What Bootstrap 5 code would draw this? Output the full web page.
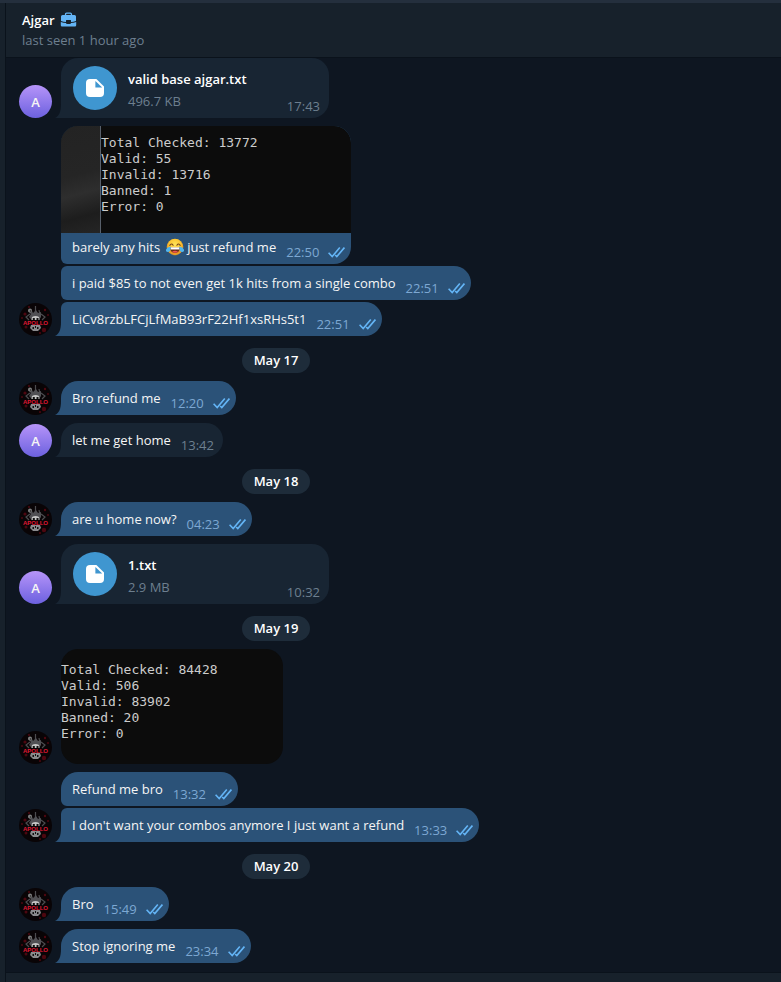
<!DOCTYPE html>
<html lang="en">
<head>
<meta charset="utf-8">
<meta name="viewport" content="width=device-width, initial-scale=1">
<title>Ajgar</title>
<link href="https://cdn.jsdelivr.net/npm/bootstrap@5.3.0/dist/css/bootstrap.min.css" rel="stylesheet">
<style>
:root{--panel:#17212b;--chat:#0e1621;--own:#2b5278;--peer:#182533;--line:#0a121b}
body{background:var(--panel);color:#f5f5f5;font-family:"Open Sans","Noto Sans",sans-serif;font-size:13px;line-height:20px}
.window-edge{height:3px;background:#242f3d}
.pane{margin-left:5px;border-left:1px solid var(--line)}
.chat-head{padding:7px 16px;border-bottom:1px solid var(--line)}
.peer-name{font-size:13px;line-height:20px;font-weight:600}
.case{margin-left:5px}
.seen{color:#6d7f8f}
.feed{background:var(--chat);padding:0 0 9px}
.track{max-width:540px}
.msg{margin-top:8px;padding-left:13px}
.msg:first-child{margin-top:0}
.msg.joined{margin-top:2px}
.face{width:33px;height:33px;margin-right:3px}
.initial{background:linear-gradient(#b694f9,#6c61df);font-weight:600}
.tail{width:6px;height:14px}
.indent{padding-left:55px}
.bubble{min-height:34px;border-radius:17px;padding:0 9px 0 11px}
.own{background:var(--own);fill:var(--own)}
.own.bubble{padding-right:6px}
.peer{background:var(--peer);fill:var(--peer)}
.tail.own,.tail.peer{background:none}
.tailed{border-bottom-left-radius:0}
.joined .bubble{border-top-left-radius:6px}
.stem{border-bottom-left-radius:6px}
.says{line-height:34px}
.stamp{color:#6d7f8f;margin-left:10px;padding-top:12px}
.own .stamp{color:#7da8d3}
.ticks{width:17px;height:12px;margin:0 0 6px 9px;fill:none;stroke:#64b5f6;stroke-width:1.6}
.day{margin-top:12px}
.day span{background:#1e2c3a;border-radius:13px;padding:0 12px;line-height:25px;font-weight:600;color:#fff}
.doc{width:268px;height:60px;padding:8px 9px 0 12px}
.doc-btn{width:44px;height:44px;background:#3f96d0;margin-right:11px}
.doc-name{font-weight:600;line-height:22px;padding-top:2px;color:#fff;margin-bottom:0}
.doc-size{line-height:22px;color:#6d7f8f}
.doc .stamp{padding-top:30px}
.shot{background:#0c0c0c;color:#ccc;font-family:"DejaVu Sans Mono","Liberation Mono",monospace;font-size:13px;line-height:16px}
.shot pre{font-family:inherit;font-size:inherit}
.shot-a{height:107px}
.shot-a pre{padding-top:9px}
.shot-b{width:222px;height:115px;border-radius:17px;padding-top:13px;margin-left:6px}
.blurred{width:40px;background:linear-gradient(165deg,#232323,#252525 45%,#2e2e2e 62%,#1d1d1d 82%,#252525);border-right:1px solid #58606b}
.bubble.captioned{padding:0}
.caption{padding:0 6px 0 11px;height:31px}
.caption .says{height:28px}
.caption .stamp{padding-top:9px}
.emoji{width:18px;height:18px;margin:0 3px 0 6px}
.composer{height:10px;border-top:1px solid var(--line)}
</style>
</head>
<body class="d-flex flex-column min-vh-100">
<svg width="0" height="0" class="position-absolute" aria-hidden="true">
  <symbol id="tail" viewBox="0 0 6 14"><path d="M6 0V14H0C4 12 6 8 6 0Z"/></symbol>
  <symbol id="ticks" viewBox="0 0 17 12"><path d="M.6 6.8 4.2 10.6 11.8 1.6M7.2 9 8.8 10.6 16.4 1.6"/></symbol>
  <symbol id="doc" viewBox="0 0 18 18"><path fill="#fff" d="M4 0H10.4L18 7.6V14A4 4 0 0 1 14 18H4A4 4 0 0 1 0 14V4A4 4 0 0 1 4 0Z"/><path fill="#3f96d0" d="M9.4 2V8.6H16.2Z"/></symbol>
</svg>

<div class="window-edge"></div>
<div class="pane d-flex flex-column flex-grow-1">
  <header class="chat-head">
    <div class="d-flex align-items-center">
      <h1 class="peer-name text-white m-0">Ajgar</h1>
      <svg class="case" width="17" height="16" viewBox="0 0 17 16" role="img" aria-label="Work">
        <path fill="none" stroke="#64b5f6" stroke-width="1.300" d="M5.500 3.500V2.500Q5.500 1.200 6.800 1.200H10.200Q11.500 1.200 11.500 2.500V3.500"/>
        <path fill="#64b5f6" d="M2.500 3H14.500A1.500 1.500 0 0 1 16 4.500V9Q13.500 10 11 10V8.500Q11 8 10.500 8H6.500Q6 8 6 8.500V10Q3.500 10 1 9V4.500A1.500 1.500 0 0 1 2.500 3Z"/>
        <path fill="#64b5f6" d="M.8 10Q3.500 11 6 11 6.200 12 7 12H10Q10.800 12 11 11 13.500 11 16.200 10V13.200A1.300 1.300 0 0 1 15 14.500H2A1.300 1.300 0 0 1 .8 13.200Z"/>
      </svg>
    </div>
    <div class="seen">last seen 1 hour ago</div>
  </header>

  <main class="feed flex-grow-1">
    <div class="track">
      <article class="msg d-flex align-items-end">
        <div class="face initial rounded-circle d-flex align-items-center justify-content-center">A</div>
        <svg class="tail peer"><use href="#tail"/></svg>
        <div class="bubble peer tailed doc d-flex">
          <button class="btn doc-btn rounded-circle p-0 border-0 d-flex align-items-center justify-content-center flex-shrink-0" aria-label="Open valid base ajgar.txt"><svg width="18" height="18"><use href="#doc"/></svg></button>
          <div class="flex-grow-1"><p class="doc-name">valid base ajgar.txt</p><div class="doc-size">496.7 KB</div></div>
          <time class="stamp">17:43</time>
        </div>
      </article>

      <article class="msg indent d-flex">
        <div class="bubble own stem captioned overflow-hidden">
          <div class="shot shot-a d-flex"><div class="blurred"></div><pre class="m-0 overflow-hidden">Total Checked: 13772
Valid: 55
Invalid: 13716
Banned: 1
Error: 0</pre></div>
          <div class="caption d-flex">
            <div class="says d-flex align-items-center"><span>barely any hits</span>
              <svg class="emoji" viewBox="0 0 18 18" role="img" aria-label="face with tears of joy">
                <defs><radialGradient id="skin" cy=".35"><stop offset="0" stop-color="#ffe45a"/><stop offset=".7" stop-color="#fcc531"/><stop offset="1" stop-color="#e99a24"/></radialGradient></defs>
                <circle cx="9" cy="9" r="8.300" fill="url(#skin)"/>
                <path fill="none" stroke="#74421a" stroke-width="1.100" stroke-linecap="round" d="M3.800 7.400Q5.400 4.800 7.100 7.200M10.900 7.200Q12.600 4.800 14.200 7.400"/>
                <path fill="#6b2b16" d="M4 9.300H14Q13.700 15 9 15T4 9.300Z"/><path fill="#fff" d="M4.400 9.300H13.600L13.200 11.600H4.800Z"/><path fill="#ef5350" d="M6 13.700Q9 11.800 12 13.700 9 16 6 13.700Z"/>
                <path fill="#4fb5ee" d="M4.500 8.500Q5 14 2 14 -.7 13.700 .2 11.300 1 9.300 4.500 8.500ZM13.500 8.500Q13 14 16 14 18.700 13.700 17.800 11.300 17 9.300 13.500 8.500Z"/>
              </svg><span>just refund me</span></div>
            <time class="stamp">22:50</time><svg class="ticks align-self-end"><use href="#ticks"/></svg>
          </div>
        </div>
      </article>

      <article class="msg joined indent d-flex">
        <div class="bubble own stem d-flex"><span class="says">i paid $85 to not even get 1k hits from a single combo</span><time class="stamp">22:51</time><svg class="ticks align-self-end"><use href="#ticks"/></svg></div>
      </article>
      <article class="msg joined d-flex align-items-end">
        <svg class="face" role="img" aria-label="Apollo">
          <g id="apollo">
            <circle cx="16.500" cy="16.500" r="16.500" fill="#090406"/>
            <g fill="#4d0710"><circle cx="6" cy="11" r="1.600"/><circle cx="10" cy="4" r="1"/><circle cx="26" cy="7" r="1.200"/><circle cx="29" cy="12" r="1"/><circle cx="25" cy="27" r="2.200"/><circle cx="7" cy="24" r="1.500"/><circle cx="21" cy="30" r="1"/><circle cx="3" cy="15" r="1"/></g>
            <g stroke="#4c4c4f" stroke-width="1.200" fill="none"><path d="M16.500 3V11M11 11 7 14 10 17M22 11 26 14 23 17M20 7 21 12"/></g>
            <path fill="#505054" d="M9 8 12 6 14 10 17 7 19 10 22 9 22 14 20 17H13L10 14 12 11Z"/>
            <circle cx="11" cy="7.500" r="2" fill="#808080"/><circle cx="11.500" cy="8" r=".8" fill="#222"/>
            <path fill="#c4c4c4" d="M13 14Q16.500 12 20 14L20.500 17H12.500Z"/>
            <path fill="#111" d="M13.800 15H15.800V17H13.800ZM17.500 15H19.500V17H17.500Z"/>
            <path fill="#8a8a8d" d="M12 22H21L22 25 19 28H14L11 25Z"/>
            <path fill="#111" d="M13.500 24H15V26H13.500ZM18 24H19.500V26H18ZM16 23H17V25H16Z"/>
            <text x="16.500" y="22" text-anchor="middle" font-family="Liberation Sans,sans-serif" font-size="6" font-weight="700" fill="#e01834">APOLLO</text>
          </g>
        </svg><svg class="tail own"><use href="#tail"/></svg>
        <div class="bubble own tailed d-flex"><span class="says">LiCv8rzbLFCjLfMaB93rF22Hf1xsRHs5t1</span><time class="stamp">22:51</time><svg class="ticks align-self-end"><use href="#ticks"/></svg></div>
      </article>

      <div class="day d-flex justify-content-center"><span>May 17</span></div>
      <article class="msg d-flex align-items-end">
        <svg class="face" role="img" aria-label="Apollo"><use href="#apollo"/></svg><svg class="tail own"><use href="#tail"/></svg>
        <div class="bubble own tailed d-flex"><span class="says">Bro refund me</span><time class="stamp">12:20</time><svg class="ticks align-self-end"><use href="#ticks"/></svg></div>
      </article>
      <article class="msg d-flex align-items-end">
        <div class="face initial rounded-circle d-flex align-items-center justify-content-center">A</div>
        <svg class="tail peer"><use href="#tail"/></svg>
        <div class="bubble peer tailed d-flex"><span class="says">let me get home</span><time class="stamp">13:42</time></div>
      </article>

      <div class="day d-flex justify-content-center"><span>May 18</span></div>
      <article class="msg d-flex align-items-end">
        <svg class="face" role="img" aria-label="Apollo"><use href="#apollo"/></svg><svg class="tail own"><use href="#tail"/></svg>
        <div class="bubble own tailed d-flex"><span class="says">are u home now?</span><time class="stamp">04:23</time><svg class="ticks align-self-end"><use href="#ticks"/></svg></div>
      </article>
      <article class="msg d-flex align-items-end">
        <div class="face initial rounded-circle d-flex align-items-center justify-content-center">A</div>
        <svg class="tail peer"><use href="#tail"/></svg>
        <div class="bubble peer tailed doc d-flex">
          <button class="btn doc-btn rounded-circle p-0 border-0 d-flex align-items-center justify-content-center flex-shrink-0" aria-label="Open 1.txt"><svg width="18" height="18"><use href="#doc"/></svg></button>
          <div class="flex-grow-1"><p class="doc-name">1.txt</p><div class="doc-size">2.9 MB</div></div>
          <time class="stamp">10:32</time>
        </div>
      </article>

      <div class="day d-flex justify-content-center"><span>May 19</span></div>
      <article class="msg d-flex align-items-end">
        <svg class="face" role="img" aria-label="Apollo"><use href="#apollo"/></svg>
        <div class="shot shot-b overflow-hidden"><pre class="m-0 overflow-hidden">Total Checked: 84428
Valid: 506
Invalid: 83902
Banned: 20
Error: 0</pre></div>
      </article>
      <article class="msg indent d-flex">
        <div class="bubble own stem d-flex"><span class="says">Refund me bro</span><time class="stamp">13:32</time><svg class="ticks align-self-end"><use href="#ticks"/></svg></div>
      </article>
      <article class="msg joined d-flex align-items-end">
        <svg class="face" role="img" aria-label="Apollo"><use href="#apollo"/></svg><svg class="tail own"><use href="#tail"/></svg>
        <div class="bubble own tailed d-flex"><span class="says">I don't want your combos anymore I just want a refund</span><time class="stamp">13:33</time><svg class="ticks align-self-end"><use href="#ticks"/></svg></div>
      </article>

      <div class="day d-flex justify-content-center"><span>May 20</span></div>
      <article class="msg d-flex align-items-end">
        <svg class="face" role="img" aria-label="Apollo"><use href="#apollo"/></svg><svg class="tail own"><use href="#tail"/></svg>
        <div class="bubble own tailed d-flex"><span class="says">Bro</span><time class="stamp">15:49</time><svg class="ticks align-self-end"><use href="#ticks"/></svg></div>
      </article>
      <article class="msg d-flex align-items-end">
        <svg class="face" role="img" aria-label="Apollo"><use href="#apollo"/></svg><svg class="tail own"><use href="#tail"/></svg>
        <div class="bubble own tailed d-flex"><span class="says">Stop ignoring me</span><time class="stamp">23:34</time><svg class="ticks align-self-end"><use href="#ticks"/></svg></div>
      </article>
    </div>
  </main>
  <footer class="composer"></footer>
</div>
<script src="https://cdn.jsdelivr.net/npm/bootstrap@5.3.0/dist/js/bootstrap.bundle.min.js"></script>
</body>
</html>
